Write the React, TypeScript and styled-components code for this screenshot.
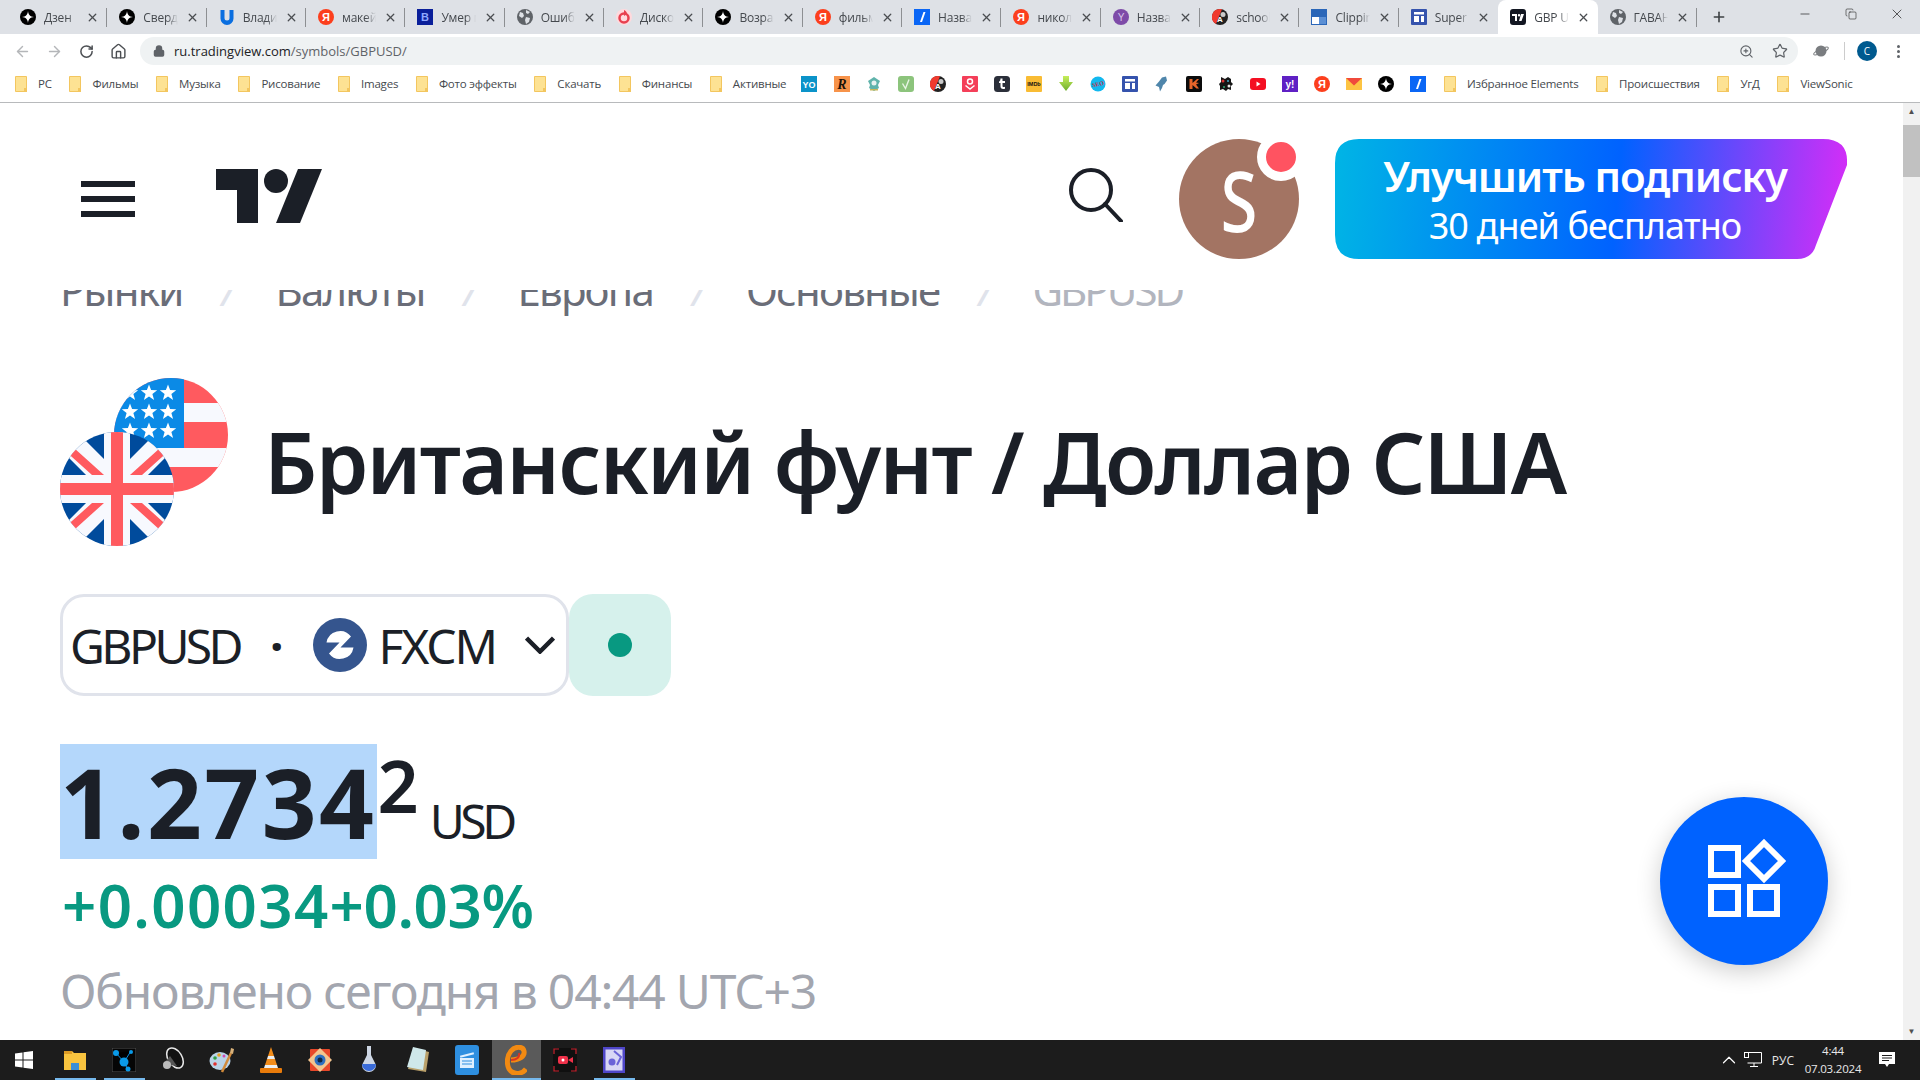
import React from 'react';
import styled, { createGlobalStyle } from 'styled-components';
import { ArrowLeft, ArrowRight, RotateCw, Home, Lock, ZoomIn, Star, Plus, Minus, X, Copy, ChevronUp } from 'lucide-react';

const PAGE_FONT = '"Noto Sans", "Open Sans", sans-serif';
const UI_FONT = '"Open Sans", "Noto Sans", sans-serif';

const GlobalStyle = createGlobalStyle`
    html, body {
        margin: 0;
        padding: 0;
        width: 1920px;
        height: 1080px;
        overflow: hidden;
        background: #fff;
    }
    * {
        box-sizing: border-box;
    }
`;

const T = ({ c = '#fff', s = 10, y = 12, w = 700, f = 'Liberation Sans', children }: { c?: string; s?: number; y?: number; w?: number; f?: string; children: React.ReactNode }) => (
    <text x="8" y={y} textAnchor="middle" fontSize={s} fontWeight={w} fontFamily={f} fill={c}>
        {children}
    </text>
);

const ICONS: Record<string, React.ReactNode> = {
    zen: (
        <>
            <circle cx="8" cy="8" r="8" fill="#000" />
            <path d="M8 2C8.5 6 10 7.5 14 8 10 8.5 8.5 10 8 14 7.5 10 6 8.5 2 8 6 7.5 7.5 6 8 2Z" fill="#fff" />
        </>
    ),
    u: <path d="M1.5 1h4v8a2.5 2.5 0 0 0 5 0V1h4v8.500a6.500 6.500 0 0 1-13 0Z" fill="#0b6fe0" />,
    ya: (
        <>
            <circle cx="8" cy="8" r="8" fill="#fc3f1d" />
            <T s={11} y={12}>Я</T>
        </>
    ),
    b: (
        <>
            <rect width="16" height="16" fill="#0a1f9a" />
            <T c="#8fa8ff" s={11} y={12}>B</T>
        </>
    ),
    globe: (
        <>
            <circle cx="8" cy="8" r="8" fill="#5f6368" />
            <path d="M3 3l3 1 1 3-2 2-3-2ZM9 8l4 1-1 4-3 2-1-4ZM9 1l4 2-2 2-2-1Z" fill="#dee1e6" />
        </>
    ),
    disco: (
        <>
            <circle cx="8" cy="8" r="8" fill="#ffd9dd" />
            <circle cx="8" cy="9" r="4.500" fill="none" stroke="#e8404f" strokeWidth="2.500" />
            <path d="M8 1c2 1 3 2 3 4L8 7Z" fill="#e8404f" />
        </>
    ),
    slash: (
        <>
            <rect width="16" height="16" fill="#0a66f5" />
            <path d="M9.500 3h2L8 13H6Z" fill="#fff" />
        </>
    ),
    purple: (
        <>
            <circle cx="8" cy="8" r="8" fill="#7e4ba8" />
            <T c="#d9c6ea" s={10} y={12} w={400}>Y</T>
        </>
    ),
    ab: (
        <>
            <circle cx="8" cy="8" r="8" fill="#222" />
            <path d="M8 0A8 8 0 0 0 4 15L10 0.300Z" fill="#f03a2e" />
            <T s={8} y={13}>A</T>
            <circle cx="11" cy="5.500" r="2.500" fill="#c9c9c9" />
        </>
    ),
    clip: (
        <>
            <rect width="16" height="16" fill="#2a66b8" />
            <rect x="1" y="8" width="7" height="7" fill="#fff" />
            <rect x="8" y="1" width="7" height="7" fill="#2a66b8" />
            <rect x="1" y="1" width="7" height="7" fill="#2a66b8" />
            <rect x="8" y="8" width="7" height="7" fill="#5b8fd4" />
        </>
    ),
    table: (
        <>
            <rect width="16" height="16" rx="1" fill="#3553ad" />
            <rect x="3" y="3" width="10" height="2.500" fill="#fff" />
            <rect x="3" y="7" width="5" height="6" fill="#fff" />
            <rect x="10" y="7" width="3" height="6" fill="#fff" />
        </>
    ),
    tv: (
        <>
            <rect width="16" height="16" rx="3" fill="#131722" />
            <path d="M2 5h5v7H5V7H2ZM11 5h3l-2.500 7H9ZM9 5a1.200 1.200 0 1 1 0 2.400A1.200 1.200 0 0 1 9 5Z" fill="#fff" />
        </>
    ),
    yo: (
        <>
            <rect width="16" height="16" fill="#0b93c9" />
            <T s={9} y={12}>YO</T>
        </>
    ),
    r: (
        <>
            <rect width="16" height="16" fill="#f7934a" />
            <text x="8" y="13" textAnchor="middle" fontSize="14" fontWeight="700" fontStyle="italic" fontFamily="Liberation Serif" fill="#1b1208">R</text>
        </>
    ),
    shield: (
        <>
            <path d="M8 1l3 2 3 2-2 4 1 3-5 3-5-3 1-3-2-4 3-2Z" fill="#5fb3ab" />
            <circle cx="8" cy="7" r="2.500" fill="#e8f2f0" />
            <rect x="4" y="13" width="8" height="1.500" fill="#c9b65a" />
        </>
    ),
    check: (
        <>
            <rect width="16" height="16" rx="3" fill="#8cc47c" />
            <path d="M4.500 7.500l3 5 3.500-9" fill="none" stroke="#e8f5e4" strokeWidth="1.400" />
        </>
    ),
    pocket: (
        <>
            <rect width="16" height="16" rx="1" fill="#f43f59" />
            <circle cx="8" cy="5.500" r="2.500" fill="none" stroke="#fff" strokeWidth="1.500" />
            <path d="M3.500 9.500L8 13l4.500-3.500" fill="none" stroke="#fff" strokeWidth="1.500" />
        </>
    ),
    tumblr: (
        <>
            <rect width="16" height="16" rx="3.500" fill="#2b2f3a" />
            <path d="M6.500 2.500h2v2.500h2.500v2H8.500v3c0 1 1 1.200 2.500.8v2c-3 .8-4.500-.3-4.500-2.500V7H5V5.500c1 0 1.500-1.500 1.500-3Z" fill="#fff" />
        </>
    ),
    imdb: (
        <>
            <rect width="16" height="16" rx="1" fill="#f9bc34" />
            <T c="#111" s={5.500} y={10}>IMDb</T>
        </>
    ),
    down: (
        <>
            <defs>
                <linearGradient id="down-green" x1="0" y1="0" x2="0" y2="1">
                    <stop offset="0" stopColor="#c6ee5a" />
                    <stop offset="1" stopColor="#6fae2e" />
                </linearGradient>
            </defs>
            <path d="M5 0h6v6h4l-7 9-7-9h4Z" fill="url(#down-green)" />
        </>
    ),
    seo: (
        <>
            <circle cx="8" cy="8" r="7.500" fill="#12b8ef" />
            <text x="8" y="10" textAnchor="middle" fontSize="6" fontWeight="700" fontFamily="Liberation Serif" fill="#c0304a" transform="rotate(-12 8 8)">SEO</text>
        </>
    ),
    python: <path d="M8 1.500l4-1 1 4-2.500 3.500L9 9l-1 3-2 3.500L5 11 1.500 9.500 5 5.500Z" fill="#4f86ab" />,
    k: (
        <>
            <rect width="16" height="16" rx="2" fill="#0c0c0c" />
            <path d="M3.500 3h3v4L11 3h2l-3 3.500 3 .5-3 1.500 3 4h-2.500L6.500 9v4h-3Z" fill="#e8652a" />
        </>
    ),
    pattern: (
        <>
            <path d="M3 1l4 2 3-2 3 2v3l2 2-2 2v4l-3-1-2 2-3-2-3 1V10L1 8l2-2Z" fill="#151515" />
            <circle cx="5" cy="5" r="1.500" fill="#d33" />
            <circle cx="11" cy="10" r="1.500" fill="#e9e9e9" />
            <circle cx="6" cy="11" r="1" fill="#3a7" />
            <circle cx="10" cy="5" r="1" fill="#4ac" />
        </>
    ),
    youtube: (
        <>
            <rect y="2" width="16" height="12" rx="3" fill="#f40f22" />
            <path d="M6.500 5.500l4 2.500-4 2.500Z" fill="#fff" />
        </>
    ),
    yh: (
        <>
            <rect width="16" height="16" fill="#5f20c4" />
            <T s={10} y={12}>y!</T>
        </>
    ),
    mail: (
        <>
            <rect y="2" width="16" height="12" fill="#fdc443" />
            <path d="M0 2h16L8 9.500Z" fill="#f04a3c" />
        </>
    )
};

const Favicon = ({ kind, size = 16 }: { kind: string; size?: number }) => (
    <svg width={size} height={size} viewBox="0 0 16 16" style={{ flex: 'none' }}>
        {ICONS[kind]}
    </svg>
);

const TABS = [
    ['zen', 'Дзен'],
    ['zen', 'Свердловская'],
    ['u', 'Владислав'],
    ['ya', 'макей'],
    ['b', 'Умер мастер'],
    ['globe', 'Ошибка'],
    ['disco', 'Дискотека'],
    ['zen', 'Возраст'],
    ['ya', 'фильмы'],
    ['slash', 'Название'],
    ['ya', 'николай'],
    ['purple', 'Название'],
    ['ab', 'school'],
    ['clip', 'Clipping'],
    ['table', 'Super (1)'],
    ['tv', 'GBP USD'],
    ['globe', 'ГАВАНА']
];

const ACTIVE_TAB = 15;

const LEFT_BOOKMARKS = ['РС', 'Фильмы', 'Музыка', 'Рисование', 'Images', 'Фото эффекты', 'Скачать', 'Финансы', 'Активные'];
const ICON_BOOKMARKS = ['yo', 'r', 'shield', 'check', 'ab', 'pocket', 'tumblr', 'imdb', 'down', 'seo', 'table', 'python', 'k', 'pattern', 'youtube', 'yh', 'ya', 'mail', 'zen', 'slash'];
const RIGHT_BOOKMARKS = ['Избранное Elements', 'Происшествия', 'УгД', 'ViewSonic'];

const CRUMBS = ['Рынки', 'Валюты', 'Европа', 'Основные', 'GBPUSD'];

const Folder = () => (
    <svg width="12" height="16" viewBox="0 0 12 16" style={{ flex: 'none' }}>
        <path d="M.5.500h11v15H.500Z" fill="#fde293" stroke="#f3c65f" />
        <rect x="9" y="12" width="3" height="4" fill="#f3c65f" />
    </svg>
);

const Logo = () => (
    <svg width="106" height="54" viewBox="0 0 106 54">
        <path d="M0 0H42V54H21V21H0Z" fill="#1b1f27" />
        <ellipse cx="60" cy="12" rx="12" ry="12" fill="#1b1f27" />
        <path d="M82 0H106L84 54H60Z" fill="#1b1f27" />
    </svg>
);

const Burger = () => (
    <svg width="54" height="36" viewBox="0 0 54 36" fill="#1b1f27">
        <rect width="54" height="6" />
        <rect y="15" width="54" height="6" />
        <rect y="30" width="54" height="6" />
    </svg>
);

const SearchGlyph = () => (
    <svg width="54" height="54" viewBox="0 0 54 54" fill="none" stroke="#1b1f27" strokeWidth="4">
        <circle cx="22" cy="22" r="20" />
        <path d="M36 36L52 53" strokeLinecap="round" />
    </svg>
);

const star = (x: number, y: number) => {
    const pts: string[] = [];
    for (let i = 0; i < 10; i++) {
        const r = i % 2 ? 3.6 : 8.6;
        const a = (Math.PI / 5) * i - Math.PI / 2;
        pts.push(`${(x + r * Math.cos(a)).toFixed(1)},${(y + r * Math.sin(a)).toFixed(1)}`);
    }
    return pts.join(' ');
};

const UsFlag = () => (
    <svg width="114" height="114" viewBox="0 0 114 114">
        <defs>
            <clipPath id="us-clip">
                <circle cx="57" cy="57" r="57" />
            </clipPath>
        </defs>
        <g clipPath="url(#us-clip)">
            <rect width="114" height="114" fill="#ff5a5f" />
            <rect y="25" width="114" height="19" fill="#f7f9fe" />
            <rect y="70" width="114" height="19" fill="#f7f9fe" />
            <rect width="70" height="70" fill="#0b8ae6" />
            {[15, 34, 53].map((y) =>
                [16, 35, 54].map((x) => <polygon key={`${x}-${y}`} points={star(x, y)} fill="#fff" />)
            )}
        </g>
    </svg>
);

const UkFlag = () => (
    <svg width="114" height="114" viewBox="0 0 114 114">
        <defs>
            <clipPath id="uk-clip">
                <circle cx="57" cy="57" r="57" />
            </clipPath>
        </defs>
        <g clipPath="url(#uk-clip)">
            <rect width="114" height="114" fill="#004b9c" />
            <path d="M0 0L114 114M114 0L0 114" stroke="#f7f9fe" strokeWidth="24" />
            <path d="M8 16L48 52M106 16L66 52M8 98L48 62M106 98L66 62" stroke="#ff5a5f" strokeWidth="8" />
            <rect x="44" width="26" height="114" fill="#f7f9fe" />
            <rect y="43" width="114" height="28" fill="#f7f9fe" />
            <rect x="51" width="12" height="114" fill="#ff5a5f" />
            <rect y="51" width="114" height="12" fill="#ff5a5f" />
        </g>
    </svg>
);

const FxcmMark = () => (
    <svg width="54" height="54" viewBox="0 0 54 54">
        <circle cx="27" cy="27" r="27" fill="#35558e" />
        <g fill="#fff">
            <path d="M13.500 24.500A13.700 13.700 0 0 1 38 18.500L26.500 30.500V24.500Z" />
            <path d="M13.500 24.500A13.700 13.700 0 0 1 38 18.500L26.500 30.500V24.500Z" transform="rotate(180 27 27)" />
        </g>
    </svg>
);

const Chevron = () => (
    <svg width="30" height="18" viewBox="0 0 30 18" fill="none" stroke="#1b1f27" strokeWidth="4.500" style={{ flex: 'none' }}>
        <path d="M1.500 2L15 15.500 28.500 2" />
    </svg>
);

const AppsGlyph = () => (
    <svg width="72" height="72" viewBox="0 0 72 72" fill="none" stroke="#fff" strokeWidth="6" overflow="visible">
        <rect x="3" y="3" width="27" height="27" />
        <rect x="3" y="42" width="27" height="27" />
        <rect x="42" y="42" width="27" height="27" />
        <path d="M56 -2L74 16 56 34 38 16Z" />
    </svg>
);

const TASK_ICONS = [
    <svg key="explorer" width="24" height="24" viewBox="0 0 24 24">
        <path d="M1 3h8l2 2h12v17H1Z" fill="#f9c43f" />
        <path d="M1 3h8v3H1Z" fill="#dd9b25" />
        <rect x="8" y="15" width="8" height="7" fill="#3b8fd8" />
    </svg>,
    <svg key="molecule" width="24" height="24" viewBox="0 0 24 24">
        <rect width="24" height="24" fill="#050505" stroke="#555" />
        <path d="M4 5L12 14 19 3M12 14L16 22" stroke="#0a8fe0" />
        <circle cx="4" cy="5" r="3" fill="#0a9ae8" />
        <circle cx="12" cy="14" r="4.500" fill="#0a9ae8" />
        <circle cx="19" cy="4" r="2" fill="#0a9ae8" />
        <circle cx="16" cy="21" r="2.500" fill="#0a9ae8" />
    </svg>,
    <svg key="speaker" width="26" height="26" viewBox="0 0 26 26" fill="none">
        <ellipse cx="15" cy="11" rx="7" ry="11" fill="#111" stroke="#e8e8e8" strokeWidth="1.500" transform="rotate(-32 15 11)" />
        <path d="M3 17L10 9 17 19Z" fill="#555" />
        <circle cx="7" cy="18" r="4" fill="#bbb" />
    </svg>,
    <svg key="palette" width="26" height="26" viewBox="0 0 26 26">
        <ellipse cx="11" cy="14" rx="10.500" ry="9" fill="#b9d3e8" />
        <circle cx="6" cy="11" r="1.800" fill="#2f9e44" />
        <circle cx="10" cy="8" r="1.800" fill="#e8a020" />
        <circle cx="15" cy="9" r="1.500" fill="#d04ab0" />
        <circle cx="6" cy="17" r="1.800" fill="#e03131" />
        <path d="M13 25L22 6" stroke="#d18a3a" strokeWidth="2.500" />
        <path d="M21 6l1-5 3 1-1 5Z" fill="#d9b27a" />
    </svg>,
    <svg key="vlc" width="22" height="26" viewBox="0 0 22 26">
        <path d="M11 0l3 9H8ZM7 12h8l2 6H5Z" fill="#f28c1a" />
        <path d="M8 9h6l1 3H7ZM5 18h12l1 3H4Z" fill="#eee" />
        <rect y="21" width="22" height="5" rx="1" fill="#e97b0a" />
    </svg>,
    <svg key="faststone" width="24" height="26" viewBox="0 0 24 26">
        <rect x="2" y="2" width="20" height="22" rx="1" fill="#e8482a" />
        <path d="M0 13L12 1l12 12-12 12Z" fill="#f3c58f" />
        <circle cx="12" cy="13" r="5.500" fill="#2d6fc0" />
        <circle cx="12" cy="13" r="2.500" fill="#10253f" />
    </svg>,
    <svg key="flask" width="16" height="28" viewBox="0 0 16 28">
        <path d="M6 0h4v9l5 10a7 7 0 0 1-14 0L6 9Z" fill="#cdd6e4" />
        <path d="M1 18h14a7 7 0 0 1-14 0Z" fill="#3a6bd8" />
    </svg>,
    <svg key="notes" width="24" height="26" viewBox="0 0 24 26">
        <path d="M8 1L23 5 20 25 2 22Z" fill="#b9a06a" />
        <path d="M7 0L20 3 17 23 1 20Z" fill="#cfe8ea" />
    </svg>,
    <svg key="clapper" width="24" height="30" viewBox="0 0 24 30">
        <rect width="24" height="30" rx="3" fill="#2e8fe0" />
        <rect x="5" y="9" width="14" height="2" transform="rotate(-14 12 10)" fill="#dff0ff" />
        <rect x="5" y="13" width="14" height="10" fill="#dff0ff" />
        <path d="M7 16h10M7 19h10" stroke="#2e8fe0" />
    </svg>,
    <svg key="edge" width="22" height="30" viewBox="0 0 22 30" fill="none">
        <path d="M6 15C15 15 20 11 19 6 18 1 10 1 6 6 1 12 1 23 7 27 12 30 18 28 21 24" stroke="#f28a12" strokeWidth="5" />
        <path d="M6 15C12 15 15 12 14 8" stroke="#d9341f" strokeWidth="2" />
    </svg>,
    <svg key="recorder" width="24" height="24" viewBox="0 0 24 24">
        <rect width="24" height="24" rx="3" fill="#101010" />
        <path d="M1 6V1h5M18 1h5v5M23 18v5h-5M6 23H1v-5" fill="none" stroke="#c9232f" strokeWidth="1.200" />
        <rect x="5" y="8" width="10" height="8" rx="2" fill="#f0314a" />
        <path d="M15 12l5-3v6Z" fill="#f0314a" />
        <circle cx="10" cy="12" r="1.500" fill="#fff" />
    </svg>,
    <svg key="video" width="22" height="26" viewBox="0 0 22 26">
        <rect width="22" height="26" fill="#4f46c8" />
        <rect x="2.500" y="2.500" width="17" height="21" fill="#d8d6f5" />
        <circle cx="9" cy="15" r="3.500" fill="#6a62d8" />
        <path d="M11 4l7 6-4 8" fill="none" stroke="#6a62d8" strokeWidth="2" />
    </svg>
];

const ACTIVE_TASK = 9;
const OPEN_TASKS = [0, 1, 9, 11];

export default function App() {
    return (
        <Screen>
            <GlobalStyle />
            <TabStrip>
                {TABS.map(([kind, title], i) => (
                    <Tab key={i} $active={i === ACTIVE_TAB} $sep={i !== ACTIVE_TAB && i !== ACTIVE_TAB - 1}>
                        <Favicon kind={kind} />
                        <TabTitle>{title}</TabTitle>
                        <X size={13} strokeWidth={2.4} color="#4a4d51" />
                    </Tab>
                ))}
                <NewTab>
                    <Plus size={16} strokeWidth={2.4} color="#3c4043" />
                </NewTab>
                <WindowControls>
                    <WindowButton>
                        <Minus size={14} strokeWidth={1.2} color="#222" />
                    </WindowButton>
                    <WindowButton>
                        <Copy size={12} strokeWidth={1.2} color="#222" />
                    </WindowButton>
                    <WindowButton>
                        <X size={16} strokeWidth={1.1} color="#222" />
                    </WindowButton>
                </WindowControls>
            </TabStrip>

            <Toolbar>
                <ToolButton $dim>
                    <ArrowLeft size={17} strokeWidth={2} />
                </ToolButton>
                <ToolButton $dim>
                    <ArrowRight size={17} strokeWidth={2} />
                </ToolButton>
                <ToolButton>
                    <RotateCw size={15} strokeWidth={2.4} />
                </ToolButton>
                <ToolButton>
                    <Home size={17} strokeWidth={2} />
                </ToolButton>
                <Omnibox>
                    <Lock size={12} strokeWidth={3} color="#5f6368" fill="#5f6368" />
                    <Url>
                        ru.tradingview.com<span>/symbols/GBPUSD/</span>
                    </Url>
                    <ZoomIn size={15} strokeWidth={1.8} color="#5f6368" />
                    <Star size={16} strokeWidth={1.8} color="#5f6368" />
                </Omnibox>
                <Planet>
                    <svg width="16" height="16" viewBox="0 0 16 16">
                        <circle cx="8" cy="8" r="5.500" fill="#7a7d80" />
                        <ellipse cx="8" cy="8" rx="8" ry="2" fill="none" stroke="#7a7d80" transform="rotate(-25 8 8)" />
                    </svg>
                </Planet>
                <ToolDivider />
                <Profile>C</Profile>
                <MenuDots>
                    <i />
                    <i />
                    <i />
                </MenuDots>
            </Toolbar>

            <BookmarkBar>
                {LEFT_BOOKMARKS.map((name) => (
                    <Bookmark key={name}>
                        <Folder />
                        {name}
                    </Bookmark>
                ))}
                <IconMarks>
                    {ICON_BOOKMARKS.map((kind, i) => (
                        <Favicon key={i} kind={kind} />
                    ))}
                </IconMarks>
                {RIGHT_BOOKMARKS.map((name) => (
                    <Bookmark key={name}>
                        <Folder />
                        {name}
                    </Bookmark>
                ))}
            </BookmarkBar>

            <Viewport>
                <Page>
                    <Header>
                        <Burger />
                        <LogoSlot>
                            <Logo />
                        </LogoSlot>
                        <SearchSlot>
                            <SearchGlyph />
                        </SearchSlot>
                        <Avatar>
                            <AvatarLetter>S</AvatarLetter>
                            <AvatarBadge />
                        </Avatar>
                        <Upgrade>
                            <UpgradeTitle>Улучшить подписку</UpgradeTitle>
                            <UpgradeSub>30 дней бесплатно</UpgradeSub>
                        </Upgrade>
                    </Header>

                    <Main>
                        <Crumbs>
                            {CRUMBS.map((c, i) => (
                                <React.Fragment key={c}>
                                    {i > 0 && <CrumbSep>/</CrumbSep>}
                                    <Crumb $last={i === CRUMBS.length - 1}>{c}</Crumb>
                                </React.Fragment>
                            ))}
                        </Crumbs>

                        <TitleRow>
                            <Flags>
                                <UsSlot>
                                    <UsFlag />
                                </UsSlot>
                                <UkSlot>
                                    <UkFlag />
                                </UkSlot>
                            </Flags>
                            <Title>Британский фунт / Доллар США</Title>
                        </TitleRow>

                        <SymbolRow>
                            <SymbolBox>
                                <SymbolName>GBPUSD</SymbolName>
                                <Dot>·</Dot>
                                <FxcmMark />
                                <Exchange>FXCM</Exchange>
                                <Chevron />
                            </SymbolBox>
                            <StatusTile>
                                <StatusDot />
                            </StatusTile>
                        </SymbolRow>

                        <PriceRow>
                            <PriceMain>1.2734</PriceMain>
                            <PriceTail>2</PriceTail>
                            <Currency>USD</Currency>
                        </PriceRow>
                        <Change>
                            <ChangeValue>+0.00034</ChangeValue>
                            <ChangePercent>+0.03%</ChangePercent>
                        </Change>
                        <Updated>Обновлено сегодня в 04:44 UTC+3</Updated>
                    </Main>

                    <Fab>
                        <AppsGlyph />
                    </Fab>
                </Page>
                <Scrollbar>
                    <ScrollArrow>▲</ScrollArrow>
                    <ScrollThumb />
                    <ScrollArrowDown>▼</ScrollArrowDown>
                </Scrollbar>
            </Viewport>

            <Taskbar>
                <StartButton>
                    <svg width="18" height="18" viewBox="0 0 18 18" fill="#fff">
                        <path d="M0 2.500L7.500 1.400V8.500H0ZM8.500 1.300L18 0V8.500H8.500ZM0 9.500H7.500V16.600L0 15.500ZM8.500 9.500H18V18L8.500 16.700Z" />
                    </svg>
                </StartButton>
                {TASK_ICONS.map((icon, i) => (
                    <TaskItem key={i} $active={i === ACTIVE_TASK} $open={OPEN_TASKS.includes(i)}>
                        {icon}
                    </TaskItem>
                ))}
                <Tray>
                    <TrayChevron size={22} strokeWidth={1.3} color="#fff" />
                    <svg width="18" height="16" viewBox="0 0 18 16" fill="none" stroke="#fff">
                        <path d="M3.500 .5H17.500V11H3.500M10 11V14M6 14.500H14" />
                        <rect x=".5" y=".5" width="4" height="5" />
                    </svg>
                    <TrayLang>РУС</TrayLang>
                    <Clock>
                        <span>4:44</span>
                        <span>07.03.2024</span>
                    </Clock>
                    <svg width="16" height="16" viewBox="0 0 16 16">
                        <path d="M0 0H16V12H10L8 15 6 12H0Z" fill="#fff" />
                        <path d="M3 3.500H13M3 6H13M3 8.500H10" stroke="#1c1c1c" />
                    </svg>
                </Tray>
            </Taskbar>
        </Screen>
    );
}

const Screen = styled.div`
    width: 1920px;
    height: 1080px;
    display: flex;
    flex-direction: column;
    overflow: hidden;
    background: #fff;
`;

const TabStrip = styled.div`
    height: 34px;
    flex: none;
    display: flex;
    padding-left: 8px;
    background: #dee1e6;
`;

const Tab = styled.div<{ $active: boolean; $sep: boolean }>`
    position: relative;
    width: 99.35px;
    flex: none;
    display: flex;
    align-items: center;
    gap: 8px;
    padding: 0 8px 0 12px;
    border-radius: 8px 8px 0 0;
    background: ${(p) => (p.$active ? '#fff' : 'transparent')};
    &::after {
        content: '';
        display: ${(p) => (p.$sep ? 'block' : 'none')};
        position: absolute;
        right: 0;
        top: 8px;
        height: 19px;
        width: 1px;
        background: #8d8f92;
    }
`;

const TabTitle = styled.span`
    flex: 1;
    min-width: 0;
    overflow: hidden;
    white-space: nowrap;
    font: 12px ${UI_FONT};
    letter-spacing: -0.2px;
    color: #45494e;
    mask-image: linear-gradient(90deg, #000 70%, transparent 100%);
`;

const NewTab = styled.div`
    width: 44px;
    display: flex;
    align-items: center;
    justify-content: center;
`;

const WindowControls = styled.div`
    margin-left: auto;
    display: flex;
    align-items: center;
    padding-bottom: 6px;
`;

const WindowButton = styled.div`
    width: 46px;
    display: flex;
    justify-content: center;
`;

const Toolbar = styled.div`
    height: 34px;
    flex: none;
    display: flex;
    align-items: center;
    padding: 0 14px 0 6px;
    background: #fff;
`;

const ToolButton = styled.div<{ $dim?: boolean }>`
    width: 32px;
    height: 32px;
    flex: none;
    display: flex;
    align-items: center;
    justify-content: center;
    color: ${(p) => (p.$dim ? '#b4b6b9' : '#4c4f53')};
`;

const Omnibox = styled.div`
    flex: none;
    width: 1658px;
    height: 28px;
    margin-left: 6px;
    display: flex;
    align-items: center;
    padding: 0 10px 0 13px;
    gap: 18px;
    border-radius: 14px;
    background: #eff2f3;
`;

const Url = styled.div`
    flex: 1;
    margin-left: -9px;
    font: 13px ${UI_FONT};
    color: #202124;
    span {
        color: #5f6368;
    }
`;

const Planet = styled.div`
    margin-left: 15px;
    display: flex;
`;

const ToolDivider = styled.div`
    width: 1px;
    height: 18px;
    margin: 0 12px 0 15px;
    background: #ccc;
`;

const Profile = styled.div`
    width: 20px;
    height: 20px;
    flex: none;
    display: flex;
    align-items: center;
    justify-content: center;
    border-radius: 50%;
    background: #005a8f;
    color: #fff;
    font: 10px ${UI_FONT};
`;

const MenuDots = styled.div`
    margin-left: 20px;
    display: flex;
    flex-direction: column;
    gap: 2px;
    i {
        width: 3px;
        height: 3px;
        border-radius: 50%;
        background: #5f6368;
    }
`;

const BookmarkBar = styled.div`
    height: 35px;
    flex: none;
    display: flex;
    align-items: center;
    gap: 17.7px;
    padding: 0 0 3px 15px;
    background: #fff;
    border-bottom: 1px solid #b8babc;
`;

const Bookmark = styled.div`
    display: flex;
    align-items: center;
    gap: 11px;
    font: 11.5px ${UI_FONT};
    letter-spacing: -0.2px;
    color: #45494e;
    white-space: nowrap;
`;

const IconMarks = styled.div`
    display: flex;
    align-items: center;
    gap: 16.05px;
    margin-left: -2.6px;
`;

const Viewport = styled.div`
    flex: 1;
    min-height: 0;
    display: flex;
`;

const Page = styled.div`
    position: relative;
    flex: 1;
    min-width: 0;
    overflow: hidden;
    font-family: ${PAGE_FONT};
    color: #1b1f27;
`;

const Header = styled.header`
    position: relative;
    z-index: 1;
    height: 187px;
    display: flex;
    align-items: center;
    padding: 5px 56px 0 81px;
    background: #fff;
`;

const LogoSlot = styled.div`
    display: flex;
    margin-left: 81px;
    margin-bottom: 6px;
`;

const SearchSlot = styled.div`
    display: flex;
    margin-left: auto;
    margin-bottom: 8px;
`;

const Avatar = styled.div`
    position: relative;
    width: 120px;
    height: 120px;
    flex: none;
    margin-left: 56px;
    display: flex;
    align-items: center;
    justify-content: center;
    border-radius: 50%;
    background: #a37463;
    color: #fff;
    font-size: 84px;
`;

const AvatarLetter = styled.span`
    transform: scaleX(0.8);
    font-weight: 500;
`;

const AvatarBadge = styled.span`
    position: absolute;
    top: -6px;
    right: -6px;
    width: 48px;
    height: 48px;
    border-radius: 50%;
    border: 9px solid #fff;
    background: #ff5361;
`;

const Upgrade = styled.div`
    width: 512px;
    height: 120px;
    flex: none;
    margin-left: 36px;
    padding-right: 12px;
    display: flex;
    flex-direction: column;
    align-items: center;
    justify-content: center;
    color: #fff;
    background: linear-gradient(95deg, #00b5e5 0%, #0062ff 55%, #d92cf7 100%);
    clip-path: path('M24 0H488Q514 0 512 26L481 106Q477 120 462 120H24Q0 120 0 96V24Q0 0 24 0Z');
`;

const UpgradeTitle = styled.div`
    font-size: 42px;
    line-height: 54px;
    font-weight: 600;
    letter-spacing: -1.1px;
`;

const UpgradeSub = styled.div`
    font-size: 36px;
    line-height: 46px;
    letter-spacing: -0.9px;
`;

const Main = styled.main`
    padding: 0 60px;
`;

const Crumbs = styled.div`
    display: flex;
    align-items: baseline;
    height: 60px;
    margin-top: -30px;
    font-size: 42px;
    line-height: 60px;
`;

const Crumb = styled.span<{ $last: boolean }>`
    letter-spacing: ${(p) => (p.$last ? '-3px' : '-1.8px')};
    color: ${(p) => (p.$last ? '#b2b5be' : '#6a6d78')};
`;

const CrumbSep = styled.span`
    margin: 0 39px;
    color: #e0e3eb;
    font-style: italic;
`;

const TitleRow = styled.div`
    display: flex;
    align-items: center;
    margin-top: 58px;
`;

const Flags = styled.div`
    position: relative;
    width: 168px;
    height: 168px;
    flex: none;
`;

const UsSlot = styled.div`
    position: absolute;
    top: 0;
    right: 0;
    display: flex;
`;

const UkSlot = styled.div`
    position: absolute;
    left: 0;
    bottom: 0;
    display: flex;
    border-radius: 50%;
`;

const Title = styled.h1`
    margin: 0 0 0 36px;
    font-size: 84px;
    line-height: 100px;
    font-weight: 600;
    letter-spacing: -1.7px;
    white-space: nowrap;
`;

const SymbolRow = styled.div`
    display: flex;
    margin-top: 48px;
    height: 102px;
`;

const SymbolBox = styled.div`
    width: 509px;
    display: flex;
    align-items: center;
    padding: 0 11px 0 7px;
    border: 3px solid #e0e3eb;
    border-radius: 24px;
    font-size: 48px;
`;

const SymbolName = styled.span`
    letter-spacing: -3.6px;
`;

const Dot = styled.span`
    margin: 0 29px 0 30px;
    font-weight: 700;
`;

const Exchange = styled.span`
    margin: 0 auto 0 12px;
    letter-spacing: -2.2px;
`;

const StatusTile = styled.div`
    width: 102px;
    display: flex;
    align-items: center;
    justify-content: center;
    border-radius: 24px;
    background: #d6f1ec;
`;

const StatusDot = styled.span`
    width: 24px;
    height: 24px;
    border-radius: 50%;
    background: #089981;
`;

const PriceRow = styled.div`
    display: flex;
    align-items: baseline;
    margin-top: 48px;
    height: 115px;
`;

const PriceMain = styled.span`
    background: #b4d7fb;
    font-size: 96px;
    line-height: 115px;
    font-weight: 700;
    letter-spacing: 2.5px;
`;

const PriceTail = styled.span`
    margin-left: 1px;
    font-size: 72px;
    line-height: 72px;
    font-weight: 600;
    transform: translateY(-26px);
`;

const Currency = styled.span`
    margin-left: 11px;
    font-size: 48px;
    letter-spacing: -4.5px;
`;

const Change = styled.div`
    margin: 10px 0 0 2px;
    font-size: 60px;
    line-height: 72px;
    font-weight: 600;
    color: #089981;
`;

const ChangeValue = styled.span`
    letter-spacing: 1.35px;
`;

const ChangePercent = styled.span`
    letter-spacing: -0.4px;
`;

const Updated = styled.div`
    margin-top: 18px;
    font-size: 48px;
    line-height: 64px;
    letter-spacing: -1.2px;
    color: #a3a6af;
    white-space: nowrap;
`;

const Fab = styled.div`
    position: absolute;
    right: 75px;
    top: 694px;
    width: 168px;
    height: 168px;
    display: flex;
    align-items: center;
    justify-content: center;
    border-radius: 50%;
    background: #0062ff;
    box-shadow: 0 6px 24px rgba(0, 0, 0, 0.2);
`;

const Scrollbar = styled.div`
    width: 17px;
    flex: none;
    display: flex;
    flex-direction: column;
    align-items: center;
    background: #f1f1f1;
    font: 8px "Liberation Sans", sans-serif;
    color: #505050;
`;

const ScrollArrow = styled.div`
    height: 22px;
    line-height: 18px;
`;

const ScrollThumb = styled.div`
    width: 100%;
    height: 52px;
    background: #c1c1c1;
`;

const ScrollArrowDown = styled.div`
    margin-top: auto;
    height: 17px;
    line-height: 17px;
`;

const Taskbar = styled.div`
    height: 40px;
    flex: none;
    display: flex;
    align-items: center;
    background: #1c1c1c;
`;

const StartButton = styled.div`
    width: 50.5px;
    flex: none;
    display: flex;
    justify-content: center;
    padding-right: 3px;
`;

const TaskItem = styled.div<{ $active: boolean; $open: boolean }>`
    position: relative;
    width: 49px;
    height: 40px;
    flex: none;
    display: flex;
    align-items: center;
    justify-content: center;
    background: ${(p) => (p.$active ? '#5a5a5a' : 'transparent')};
    &::after {
        content: '';
        display: ${(p) => (p.$open ? 'block' : 'none')};
        position: absolute;
        bottom: 0;
        left: ${(p) => (p.$active ? '0' : '4px')};
        right: ${(p) => (p.$active ? '0' : '4px')};
        height: 2px;
        background: #76b9ed;
    }
`;

const Tray = styled.div`
    margin-left: auto;
    display: flex;
    align-items: center;
    gap: 10px;
    padding-right: 25px;
    color: #fff;
    font: 12px ${UI_FONT};
`;

const TrayChevron = styled(ChevronUp)`
    margin-right: -6px;
`;

const TrayLang = styled.span`
    color: #e8e8e8;
`;

const Clock = styled.div`
    width: 80px;
    margin: 0 -4px 0 -11px;
    display: flex;
    flex-direction: column;
    align-items: center;
    gap: 2px;
    color: #e8e8e8;
    font-size: 11.5px;
    letter-spacing: -0.2px;
    line-height: 16px;
`;
